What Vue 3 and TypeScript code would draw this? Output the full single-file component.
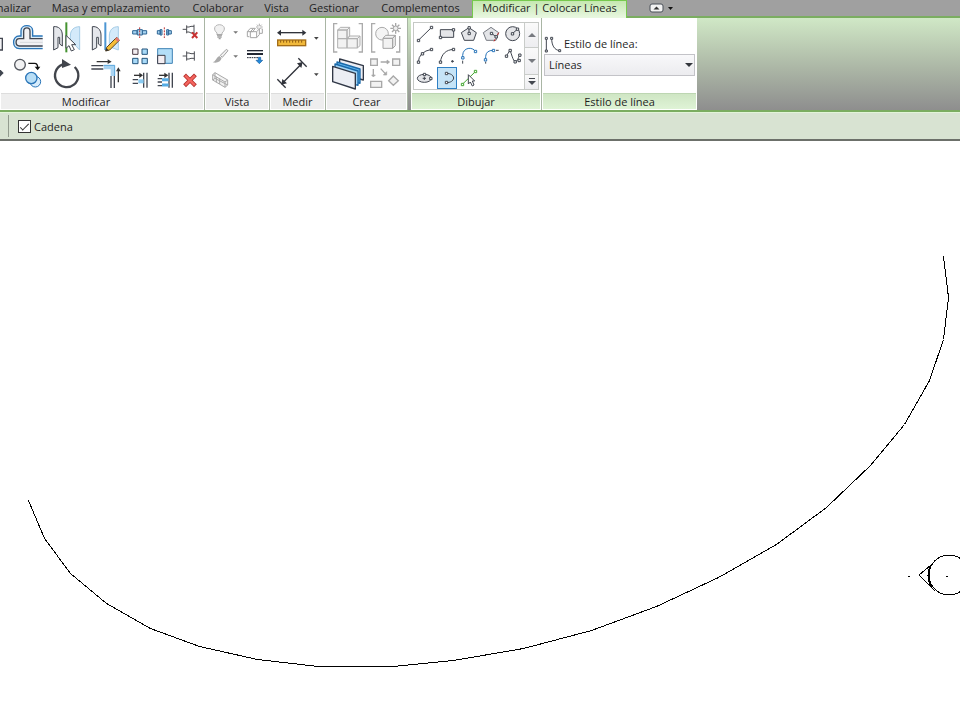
<script setup lang="ts">
import { ref } from 'vue'

const tabs: string[] = ['nalizar', 'Masa y emplazamiento', 'Colaborar', 'Vista', 'Gestionar', 'Complementos', 'Modificar | Colocar Líneas']
const activeTab = ref('Modificar | Colocar Líneas')
const chain = ref(true)
const lineStyle = ref('Líneas')

const spline: [number, number][] = [
  [28, 359], [44, 397], [70, 432], [106, 462], [150, 487], [199, 505], [257, 518], [318, 525],
  [392, 525], [453, 519], [523, 507], [591, 489], [656, 465], [718, 436], [776, 403], [826, 366],
  [870, 324], [904, 283], [929, 239], [943, 198], [948, 156], [943, 115],
]
const splinePoints = spline.map((p) => p.join(',')).join(' ')
</script>

<template>
  <div class="app">
    <nav class="tabs">
      <button v-for="tab in tabs" :key="tab" class="tab" :class="{ active: tab === activeTab }" @click="activeTab = tab">{{ tab }}</button>
      <button class="collapse" aria-label="Minimizar">
        <svg width="26" height="10" viewBox="0 0 26 10">
          <rect x="1" y="1" width="13" height="8" rx="2" fill="#f2f2f2" stroke="#4a5058" />
          <path d="M4.500 6.500L7.500 3.500L10.500 6.500Z" fill="#333" />
          <path d="M19 4H24L21.500 7Z" fill="#111" />
        </svg>
      </button>
    </nav>

    <header class="ribbon">
      <section class="panel modify">
        <div class="tools">
          <div class="large">
            <button class="tool"><svg viewBox="0 60 24 108"><path d="M-8 115H7V150H-8" fill="#f4f4f6" stroke="#414650" stroke-width="4" /></svg></button>
            <button class="tool"><svg viewBox="24 60 120 108" fill="none">
              <path d="M128 108H98V92C98 72 63 72 63 92V108H58C35 108 35 146 58 146H128" fill="#d9ebf8" stroke="#2a75b8" stroke-width="4" />
              <path d="M128 116H90V94C90 80 71 80 71 94V116H58C45 116 45 138 58 138H128" fill="#f1f1f4" stroke="#414650" stroke-width="4" />
              <path d="M60 127H128" stroke="#d5d8dd" stroke-width="3" />
            </svg></button>
            <button class="tool"><svg viewBox="144 60 117 108">
              <path d="M161 80C175 78 187 88 187 105V138L179 132V112H174V143L161 150Z" fill="#e5e7eb" stroke="#414650" stroke-width="3" />
              <path d="M239 80C222 80 211 90 211 108V120L239 150Z" fill="#d4eafa" stroke="#a5cce6" stroke-width="3" />
              <path d="M199 67V157" stroke="#459331" stroke-width="6" />
              <path d="M198 106V145L207 137L214 153L223 149L215 134H227Z" fill="#fff" stroke="#414650" stroke-width="3" />
            </svg></button>
            <button class="tool"><svg viewBox="261 60 117 108">
              <path d="M277 80C291 78 303 88 303 105V138L295 132V112H290V143L277 150Z" fill="#e5e7eb" stroke="#414650" stroke-width="3" />
              <path d="M355 80C338 80 328 90 328 108V140L355 150Z" fill="#d4eafa" stroke="#a5cce6" stroke-width="3" />
              <path d="M316 67V150" stroke="#4c96d3" stroke-width="6" />
              <path d="M320 142L350 112L358 121L329 150L317 153Z" fill="#f6bd36" stroke="#5a4621" stroke-width="3" />
              <path d="M345 117L351 111L359 120L353 126Z" fill="#e47772" />
              <path d="M319 144L326 151L317 154Z" fill="#333" />
            </svg></button>
            <button class="tool"><svg viewBox="0 168 24 108"><path d="M-8 200L11 219L-8 238Z" fill="#414650" /></svg></button>
            <button class="tool"><svg viewBox="24 168 120 108">
              <circle cx="60" cy="194" r="16" fill="#f2f2f3" stroke="#52565d" stroke-width="4" />
              <path d="M85 190H104Q113 190 113 203" fill="none" stroke="#111" stroke-width="4" />
              <path d="M104 200H121L113 211Z" fill="#111" />
              <circle cx="106" cy="245" r="16" fill="#d8edfc" stroke="#2a75b8" stroke-width="3" />
              <circle cx="94" cy="234" r="17" fill="#b8def6" stroke="#2a75b8" stroke-width="4" />
            </svg></button>
            <button class="tool"><svg viewBox="144 168 117 108">
              <path d="M224 201A35 35 0 1 1 187 194" fill="none" stroke="#42454c" stroke-width="7" />
              <path d="M186 177L213 194L186 204Z" fill="#42454c" />
            </svg></button>
            <button class="tool"><svg viewBox="261 168 117 108" fill="none">
              <path d="M274 197H310M274 207H310M333 228V264M343 228V264" stroke="#414650" stroke-width="4" />
              <path d="M311 202H338V228" stroke="#a9d4f2" stroke-width="12" />
              <path d="M311 196H344V228" stroke="#56a4dc" stroke-width="3" />
              <path d="M290 185H325M355 247V211" stroke="#333" stroke-width="4" />
              <path d="M323 178L335 185L323 192ZM348 214L355 202L362 214Z" fill="#333" />
            </svg></button>
          </div>
          <div class="small">
            <button class="tool"><svg viewBox="381 60 75 72">
              <path d="M398 92H411V102H398ZM427 92H440V102H427Z" fill="#a7d3f0" stroke="#2e6696" stroke-width="3" />
              <path d="M412 89H427V105H412Z" fill="#a7d3f0" stroke="#2e6696" stroke-width="3" />
              <path d="M419 82V114" stroke="#bd3535" stroke-width="3" stroke-dasharray="6 3" />
            </svg></button>
            <button class="tool"><svg viewBox="456 60 75 72">
              <path d="M472 92H482V102H472ZM504 92H514V102H504ZM480 89H486V105H480ZM500 89H506V105H500Z" fill="#a7d3f0" stroke="#2e6696" stroke-width="3" />
              <path d="M493 82V114" stroke="#bd3535" stroke-width="3" stroke-dasharray="6 3" />
            </svg></button>
            <button class="tool"><svg viewBox="531 60 75 72">
              <path d="M548 88H560M560 76V100M582 74V102M560 81H567L573 79H582M560 96H567L573 99H582" fill="none" stroke="#4c4f55" stroke-width="3" />
              <path d="M576 97L592 114M592 97L576 114" stroke="#c83232" stroke-width="6" />
            </svg></button>
            <button class="tool"><svg viewBox="381 132 75 72" stroke-width="3">
              <path d="M398 147H414V163H398Z" fill="#f3eef1" stroke="#4a3a44" />
              <path d="M426 147H442V163H426ZM398 175H414V191H398ZM426 175H442V191H426Z" fill="#a9daf8" stroke="#25557c" />
            </svg></button>
            <button class="tool"><svg viewBox="456 132 75 72">
              <path d="M473 146H517V190H473Z" fill="#b4dff8" stroke="#3f83b5" stroke-width="3" />
              <path d="M473 166H495V191H473Z" fill="#f4eef2" stroke="#3b3b46" stroke-width="3" />
            </svg></button>
            <button class="tool"><svg viewBox="531 132 75 72"><path d="M548 168H560M560 154V182M583 154V182M560 159H567L573 161H583M560 177H567L573 175H583" fill="none" stroke="#4c4f55" stroke-width="3" /></svg></button>
            <button class="tool"><svg viewBox="381 204 75 72">
              <path d="M398 239H414M398 250H414M431 218V263M441 218V263" stroke="#414650" stroke-width="4" />
              <path d="M415 244H431" stroke="#8acbf2" stroke-width="12" />
              <path d="M402 226H421" stroke="#333" stroke-width="4" /><path d="M418 218L429 226L418 234Z" fill="#333" />
            </svg></button>
            <button class="tool"><svg viewBox="456 204 75 72">
              <path d="M473 236H486M473 246H486M473 257H486M507 218V263M517 218V263" stroke="#414650" stroke-width="4" />
              <path d="M486 239H506M486 255H506" stroke="#55ace5" stroke-width="9" />
              <path d="M477 226H496" stroke="#333" stroke-width="4" /><path d="M493 218L505 226L493 234Z" fill="#333" />
            </svg></button>
            <button class="tool"><svg viewBox="531 204 75 72">
              <path d="M558 229L582 253M582 229L558 253" stroke="#b5312c" stroke-width="12" stroke-linecap="square" />
              <path d="M558 229L582 253M582 229L558 253" stroke="#f4655f" stroke-width="7" stroke-linecap="square" />
            </svg></button>
          </div>
        </div>
        <h2 class="caption">Modificar</h2>
      </section>

      <section class="panel view">
        <div class="tools">
          <div class="view-grid">
            <button class="tool"><svg viewBox="18 60 78 72">
              <path d="M51 105V99C40 90 41 75 58 74C76 75 77 90 66 99V105Z" fill="#f1f1f1" stroke="#b5b5b5" stroke-width="3" />
              <path d="M51 105H66M52 111H65M56 116H62" stroke="#9f9f9f" stroke-width="4" />
            </svg></button>
            <button class="tool"><svg viewBox="96 60 24 72"><path d="M100 94H114L107 101Z" fill="#777" /></svg></button>
            <button class="tool"><svg viewBox="120 60 87 72">
              <path d="M142 95L151 85H166L158 95H142V110H148M151 95H170V113H151ZM170 95L178 87V104L170 113M151 95L160 86M178 100H187V86" fill="none" stroke="#a5a5a5" stroke-width="3" />
              <path d="M178 71V91M168 81H188M171 74L185 88M185 74L171 88" stroke="#aaa" stroke-width="3" /><circle cx="178" cy="81" r="4" fill="#eee" />
            </svg></button>
            <button class="tool"><svg viewBox="18 132 78 72">
              <path d="M61 166L79 148L84 152L67 172Z" fill="#f0f0f0" stroke="#a1a1a1" stroke-width="3" />
              <path d="M38 187C48 184 48 173 58 168L65 174C62 186 51 190 38 187Z" fill="#aaa" />
            </svg></button>
            <button class="tool"><svg viewBox="96 132 24 72"><path d="M100 166H114L107 173Z" fill="#777" /></svg></button>
            <button class="tool"><svg viewBox="120 132 87 72">
              <path d="M141 152H189" stroke="#222733" stroke-width="4" /><path d="M141 162H189" stroke="#222733" stroke-width="6" />
              <path d="M141 173H176" stroke="#222733" stroke-width="3" stroke-dasharray="5 2" />
              <path d="M175 172H182V181H188L178 191L168 181H175Z" fill="#238bdd" stroke="#175c9f" stroke-width="2" />
            </svg></button>
            <button class="tool"><svg viewBox="18 204 78 72"><path d="M38 224L45 218L83 240V255L75 262L38 240ZM38 224L75 246V262M75 246L83 240M45 218V235L83 255M38 240L45 235M49 230V247M59 235V252" fill="#f2f2f2" stroke="#aaa" stroke-width="3" /></svg></button>
          </div>
        </div>
        <h2 class="caption">Vista</h2>
      </section>

      <section class="panel measure">
        <div class="tools">
          <div class="measure-grid">
            <button class="tool"><svg viewBox="213 60 123 108">
              <path d="M237 98H312" stroke="#30333b" stroke-width="4" /><path d="M243 89L231 98L243 107ZM307 89L319 98L307 107Z" fill="#30333b" />
              <rect x="233" y="120" width="84" height="17" fill="#f1b93b" stroke="#a36d18" stroke-width="4" />
              <path d="M242 121V128M251 121V128M260 121V128M269 121V128M278 121V128M287 121V128M296 121V128M305 121V128" stroke="#8c5a12" stroke-width="3" />
            </svg></button>
            <button class="tool"><svg viewBox="336 60 24 108"><path d="M342 111H356L349 119Z" fill="#444" /></svg></button>
            <button class="tool"><svg viewBox="213 168 123 108">
              <path d="M232 238L257 263M295 175L320 200M250 247L302 194" stroke="#30333b" stroke-width="4" />
              <path d="M244 254L247 237L261 250ZM308 186L291 190L304 204Z" fill="#30333b" />
            </svg></button>
            <button class="tool"><svg viewBox="336 168 24 108"><path d="M342 220H356L349 228Z" fill="#444" /></svg></button>
          </div>
        </div>
        <h2 class="caption">Medir</h2>
      </section>

      <section class="panel create">
        <div class="tools">
          <div class="create-grid">
            <button class="tool"><svg viewBox="390 60 108 108">
              <path d="M412 71H401V156H412M476 71H487V156H476" fill="none" stroke="#ababab" stroke-width="4" />
              <path d="M413 90L421 82H449L441 90ZM413 90H441V116H413ZM441 90L449 82V108L441 116ZM413 116H441V144H413ZM441 116L449 108H480L472 116ZM441 116H472V144H441ZM472 116L480 108V137L472 144Z" fill="#f2f2f2" stroke="#b0b0b0" stroke-width="3" />
            </svg></button>
            <button class="tool"><svg viewBox="498 60 120 108">
              <path d="M526 71H515V156H526M588 156H599V108" fill="none" stroke="#ababab" stroke-width="4" />
              <circle cx="546" cy="101" r="19" fill="#f4f4f4" stroke="#aaa" stroke-width="3" />
              <path d="M549 115L557 106H586L578 115ZM549 115H578V145H549ZM578 115L586 106V137L578 145Z" fill="#f2f2f2" stroke="#a4a4a4" stroke-width="3" />
              <path d="M587 69V101M571 85H603M576 74L598 96M598 74L576 96" stroke="#a7a7a7" stroke-width="4" /><circle cx="587" cy="85" r="7" fill="#eee" stroke="#aaa" stroke-width="3" />
            </svg></button>
            <button class="tool"><svg viewBox="390 168 108 108" stroke-width="4" stroke-linejoin="round">
              <path d="M419 177L490 197V240L419 220Z" fill="#eceef4" stroke="#303746" />
              <path d="M411 186L480 207V250L411 230Z" fill="#61b6ef" stroke="#1968a9" />
              <path d="M405 192L474 213V256L405 236Z" fill="#a4d5f5" stroke="#1968a9" />
              <path d="M398 199L466 220V267L398 245Z" fill="#eceef4" stroke="#303746" />
            </svg></button>
            <button class="tool"><svg viewBox="498 168 120 108" fill="#f2f2f2" stroke="#a8a8a8" stroke-width="4">
              <path d="M512 177H532V196H512ZM578 177H599V196H578ZM512 244H545V262H512ZM580 228L595 242L580 256L566 242Z" />
              <path d="M542 186H566M520 207V228M542 206L558 223" fill="none" />
              <path d="M561 180L569 186L561 192ZM515 225L520 231L526 225ZM560 215V225H550Z" fill="#a8a8a8" stroke-width="2" />
            </svg></button>
          </div>
        </div>
        <h2 class="caption">Crear</h2>
      </section>

      <section class="panel context draw">
        <div class="tools">
          <div class="gallery">
            <div class="gallery-grid">
              <button class="tool"><svg viewBox="27 69 66 66" class="line"><path d="M40 121L80 82" /><path class="node" d="M37 118H44V125H37ZM76 79H83V86H76Z" /></svg></button>
              <button class="tool"><svg viewBox="93 69 66 66" class="line"><path d="M106 89H146V112H106Z" fill="#e4e5e8" /><path class="node" d="M103 109H110V116H103ZM142 86H149V93H142Z" /></svg></button>
              <button class="tool"><svg viewBox="159 69 66 66" class="line"><path d="M192 83L214 98L206 121H178L169 98Z" fill="#e4e5e8" /><path d="M192 84V99" /><path class="node" d="M189 80H196V87H189ZM189 97H196V104H189Z" /></svg></button>
              <button class="tool"><svg viewBox="225 69 66 66" class="line"><path d="M258 82L281 98L273 121H244L235 98Z" fill="#e4e5e8" stroke="#777b83" /><path d="M260 100L271 109" /><path d="M281 98L267 124" stroke="#c62828" stroke-dasharray="8 3" /><path class="node" d="M256 97H263V104H256ZM270 107H277V114H270Z" /></svg></button>
              <button class="tool"><svg viewBox="291 69 66 66" class="line"><circle cx="323" cy="101" r="21" fill="#e4e5e8" /><path d="M322 101L337 88" /><path class="node" d="M319 98H326V105H319ZM334 84H341V91H334Z" /></svg></button>
              <button class="tool"><svg viewBox="27 135 66 66" class="line"><path d="M40 187Q41 155 80 148" /><path class="node" d="M37 183H44V190H37ZM49 158H56V165H49ZM76 145H83V152H76Z" /></svg></button>
              <button class="tool"><svg viewBox="93 135 66 66" class="line"><path d="M106 187C109 163 122 149 147 148M142 180V188M138 184H147" /><path class="node" d="M103 183H110V190H103ZM142 145H149V152H142Z" /></svg></button>
              <button class="tool"><svg viewBox="159 135 66 66" class="line"><path class="blue" d="M173 173V166C174 141 203 140 211 154" /><path d="M173 182V191" /><path class="node blue" d="M170 170H177V177H170ZM208 151H215V158H208Z" /></svg></button>
              <button class="tool"><svg viewBox="225 135 66 66" class="line"><path class="blue" d="M242 179V169Q243 151 265 151" /><path d="M242 185V191M273 151H281" /><path class="node blue" d="M238 176H245V183H238ZM262 148H269V155H262Z" /></svg></button>
              <button class="tool"><svg viewBox="291 135 66 66" class="line"><path d="M304 168L315 151C319 159 324 184 331 185C338 184 339 174 344 166" /><path class="node" d="M301 165H308V172H301ZM312 148H319V155H312ZM327 182H334V189H327ZM341 162H348V169H341ZM339 178H346V185H339Z" /></svg></button>
              <button class="tool"><svg viewBox="27 201 66 66" class="line"><ellipse cx="58" cy="235" rx="21" ry="12" fill="#e4e5e8" /><path d="M58 230V240M53 235H63" /><path class="node" d="M55 220H62V227H55ZM74 232H81V239H74Z" /></svg></button>
              <button class="tool selected" aria-pressed="true"><svg viewBox="93 201 66 66" class="line"><path d="M124 220C136 220 145 225 146 234C145 243 136 248 124 248" /><path class="node" d="M121 217H128V224H121ZM121 244H128V251H121Z" /></svg></button>
              <button class="tool"><svg viewBox="159 201 66 66" class="line"><path class="green" d="M172 253L211 215" /><path class="node green" d="M169 250H176V257H169ZM208 211H215V218H208Z" /><path d="M190 224V252L196 246L202 258L207 255L202 243H209Z" fill="#fff" /></svg></button>
            </div>
            <div class="gallery-scroll">
              <button class="scroll" aria-label="Arriba"><svg width="8" height="5" viewBox="0 0 8 5"><path d="M0 4L4 0L8 4Z" fill="#777a80" /></svg></button>
              <button class="scroll" aria-label="Abajo"><svg width="8" height="5" viewBox="0 0 8 5"><path d="M0 0L4 4L8 0Z" fill="#777a80" /></svg></button>
              <button class="scroll" aria-label="Más"><svg width="8" height="8" viewBox="0 0 8 8"><path d="M1 0H7V1H1ZM0 3H8L4 7Z" fill="#444850" /></svg></button>
            </div>
          </div>
        </div>
        <h2 class="caption">Dibujar</h2>
      </section>

      <section class="panel context style">
        <div class="tools">
          <label class="style-label" for="line-style">
            <svg width="18" height="18" viewBox="12 102 54 54" class="line"><path d="M19 112V150M35 112C35 133 43 147 59 149" /><path class="node" d="M16 109H22V115H16ZM16 147H22V153H16ZM32 109H38V115H32ZM56 146H62V152H56Z" /></svg>
            <span>Estilo de línea:</span>
          </label>
          <div class="select-box">
            <select id="line-style" v-model="lineStyle"><option>Líneas</option></select>
            <svg class="select-arrow" width="8" height="4" viewBox="0 0 8 4"><path d="M0 0H8L4 4Z" fill="#33363c" /></svg>
          </div>
        </div>
        <h2 class="caption">Estilo de línea</h2>
      </section>
    </header>

    <div class="options">
      <label class="chain"><input v-model="chain" type="checkbox" /><span>Cadena</span></label>
    </div>

    <main>
      <svg class="canvas" viewBox="0 0 960 584" fill="none" stroke="#000" shape-rendering="crispEdges">
        <polyline :points="splinePoints" transform="translate(0.500 0.500)" />
        <circle cx="949" cy="434" r="20" />
        <path d="M931 424L919 434L935 450" />
        <path d="M931 424Q926 434 931 446" stroke-width="2" />
        <path d="M908 435.500H910M946 435.500H948" />
      </svg>
    </main>
  </div>
</template>

<style>
body {
  margin: 0;
  background: #fff;
}
</style>

<style scoped>
.app {
  font-family: "Open Sans", "Noto Sans", sans-serif;
  font-size: 11px;
  line-height: 16px;
  color: #1f1f1f;
  overflow: hidden;
}
button {
  margin: 0;
  padding: 0;
  border: 0;
  background: none;
  font: inherit;
  color: inherit;
}
.tabs {
  display: grid;
  grid-template-columns: 40px 142px 72px 45px 70px 103px 155px 70px;
  height: 16px;
  background: #a0a0a0;
  border-bottom: 2px solid #7bad61;
}
.tab {
  display: flex;
  justify-content: center;
  white-space: nowrap;
}
.tab:first-child {
  justify-content: flex-end;
  padding-right: 9px;
}
.tab.active {
  height: 18px;
  background: linear-gradient(#c5e8b0, #e9f7e1);
  border: solid #76c94d;
  border-width: 1px 1px 0;
  line-height: 14px;
}
.collapse {
  display: flex;
  align-items: center;
  justify-content: center;
  height: 15px;
}
.ribbon {
  display: flex;
  height: 92px;
  background: linear-gradient(#d0e8c6, #b2bfab 45%, #8e8e8e);
  border-bottom: 2px solid #7bad61;
}
.panel {
  display: flex;
  flex-direction: column;
  box-sizing: border-box;
  background: #fff;
  border-right: 1px solid #a9b5a4;
}
.modify { width: 205px; }
.view { width: 65px; }
.measure { width: 56px; }
.create { width: 82px; }
.draw { width: 131px; margin-left: 3px; }
.style { width: 155px; border-right: 0; }
.tools {
  flex: 1;
  display: flex;
  align-items: flex-start;
  padding-top: 2px;
}
.caption {
  margin: 0 1px 1px;
  height: 16px;
  background: #eee;
  border-top: 1px solid #ddd;
  box-sizing: border-box;
  font-size: 11px;
  font-weight: 400;
  line-height: 16px;
  text-align: center;
  white-space: nowrap;
}
.modify .caption { padding-right: 32px; }
.context .caption {
  background: linear-gradient(#cfe6c4, #dff3d6);
  border-top-color: #bdd6b2;
}
.tool {
  display: block;
  min-width: 0;
}
.tool svg {
  display: block;
  width: 100%;
  height: 100%;
}
.large {
  display: grid;
  grid-template-columns: 8px 40px 39px 39px;
  grid-auto-rows: 36px;
}
.small {
  display: grid;
  grid-template-columns: repeat(3, 25px);
  grid-auto-rows: 24px;
  padding-left: 1px;
}
.view-grid {
  display: grid;
  grid-template-columns: 26px 8px 29px;
  grid-auto-rows: 24px;
  padding-left: 1px;
}
.measure-grid {
  display: grid;
  grid-template-columns: 41px 8px;
  grid-auto-rows: 36px;
  padding-left: 1px;
}
.create-grid {
  display: grid;
  grid-template-columns: 36px 40px;
  grid-auto-rows: 36px;
  padding-left: 4px;
}
.draw .tools { padding: 4px 2px 0; }
.gallery {
  display: flex;
  border: 1px solid #c6c9c6;
}
.gallery-grid {
  display: grid;
  grid-template-columns: repeat(5, 22px);
  grid-auto-rows: 22px;
}
.tool.selected {
  background: #c6e4f7;
  box-shadow: inset 0 0 0 1px #2f80c4;
  margin: 0 1px;
}
.tool.selected svg { margin: 0 -1px; width: 22px; }
.gallery-scroll {
  display: grid;
  grid-template-rows: 24px 27px 15px;
  width: 13px;
  border-left: 1px solid #c9ccc9;
}
.scroll {
  display: flex;
  align-items: center;
  justify-content: center;
  background: linear-gradient(#fafafa, #ededf0);
}
.scroll + .scroll { border-top: 1px solid #c9ccc9; }
.line {
  fill: none;
  stroke: #414650;
  stroke-width: 3px;
}
.node {
  fill: #fff;
}
.blue { stroke: #2874b9; }
.green { stroke: #42a62f; }
.style .tools {
  flex-direction: column;
  align-items: stretch;
  padding: 16px 2px 0;
}
.style-label {
  display: flex;
  align-items: center;
  gap: 2px;
  height: 20px;
}
.style-label svg { flex: none; }
.select-box {
  position: relative;
}
select {
  display: block;
  appearance: none;
  box-sizing: border-box;
  width: 100%;
  height: 22px;
  margin: 0;
  padding: 0 4px;
  border: 1px solid #c3c3c8;
  border-radius: 0;
  background: linear-gradient(#f8f8fa, #ececef);
  color: #1f1f1f;
  font: inherit;
}
.select-arrow {
  position: absolute;
  right: 2px;
  top: 9px;
  pointer-events: none;
}
.options {
  display: flex;
  align-items: center;
  height: 26px;
  padding-left: 8px;
  background: #d8e3d2;
  border-top: 1px solid #e2f5d8;
  border-bottom: 2px solid #6c706a;
}
.options::before {
  content: "";
  width: 1px;
  height: 22px;
  margin-right: 9px;
  background: #929b8e;
}
.chain {
  display: flex;
  align-items: center;
  gap: 3px;
  padding-top: 1px;
}
.chain input {
  appearance: none;
  box-sizing: border-box;
  display: grid;
  place-items: center;
  width: 13px;
  height: 13px;
  margin: 0;
  border: 1px solid #333;
  background: #fff;
}
.chain input:checked::before {
  content: "";
  width: 8px;
  height: 3px;
  border: solid #333;
  border-width: 0 0 1px 1px;
  transform: translateY(-1px) rotate(-45deg);
}
.canvas {
  display: block;
  width: 100%;
}
</style>
